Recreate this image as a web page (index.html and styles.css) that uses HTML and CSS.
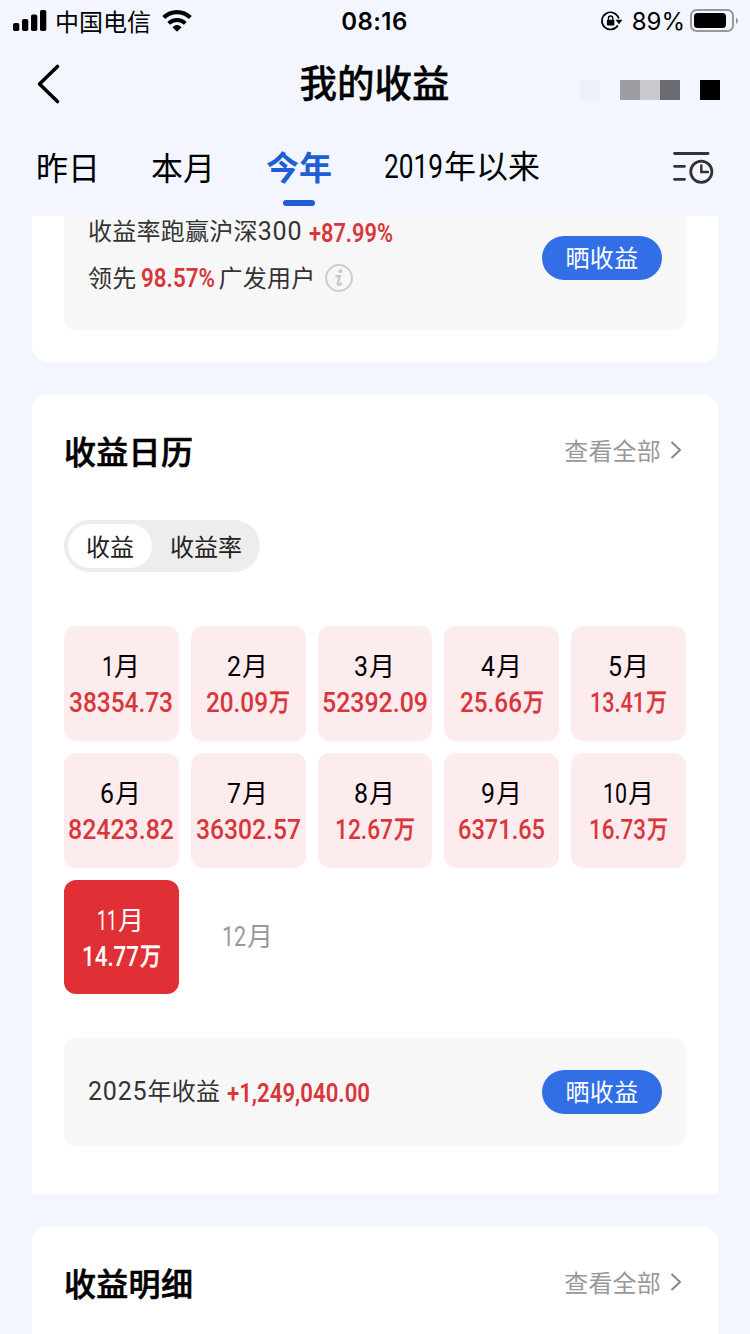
FILE: index.html
```html
<!DOCTYPE html>
<html lang="zh-CN">
<head>
<meta charset="utf-8">
<title>我的收益</title>
<link rel="stylesheet" href="styles.css">
</head>
<body>
<div class="status">
  <div class="status-left">
    <svg width="34" height="22" viewBox="0 0 34 22"><rect x="0" y="13" width="6.3" height="8" rx="1.8"/><rect x="9" y="9" width="6.3" height="12" rx="1.8"/><rect x="18" y="4.500" width="6.300" height="16.500" rx="1.800"/><rect x="27" y="0" width="6.300" height="21" rx="1.800"/></svg>
    <span class="carrier">中国电信</span>
    <svg width="30" height="22" viewBox="0 0 30 22"><path d="M1.700 7.600A18.800 18.800 0 0 1 28.300 7.600" fill="none" stroke="#000" stroke-width="4.200"/><path d="M6.700 13.300A11.800 11.800 0 0 1 23.300 13.300" fill="none" stroke="#000" stroke-width="4"/><path d="M10.400 17.200Q15 13 19.600 17.200L15 21.800Z"/></svg>
  </div>
  <span class="clock">08:16</span>
  <div class="status-right">
    <svg width="22" height="20" viewBox="0 0 22 20"><path d="M16.800 14.500A8.600 8.600 0 1 1 17.800 7.500" fill="none" stroke="#000" stroke-width="1.700"/><path d="M14.500 8.800H21.500L18 13.200Z"/><rect x="5.900" y="8.700" width="7.400" height="5.900" rx="1"/><path d="M7.400 9V7.200a2.200 2.200 0 0 1 4.400 0V9" fill="none" stroke="#000" stroke-width="1.300"/></svg>
    <span class="percent">89%</span>
    <svg width="50" height="24" viewBox="0 0 50 24"><rect x="1" y="1" width="42" height="21" rx="5.500" fill="none" stroke="#97989d" stroke-width="2"/><rect x="4" y="4" width="32" height="15" rx="3.500"/><path d="M46 8.500q2 .8 2 3.200t-2 3.200z" fill="#97989d"/></svg>
  </div>
</div>
<header class="header">
  <svg class="back" width="24" height="40" viewBox="0 0 24 40"><path d="M20.500 2.500L2.500 20L20.500 37.500" fill="none" stroke="#000" stroke-width="3.600" stroke-linecap="round" stroke-linejoin="round"/></svg>
  <h1 class="title">我的收益</h1>
  <div class="mosaic"><i class="m1"></i><i class="m0"></i><i class="m2"></i><i class="m3"></i><i class="m4"></i><i class="m0"></i><i class="m5"></i></div>
</header>
<nav class="tabs">
  <span class="tab">昨日</span>
  <span class="tab">本月</span>
  <span class="tab active">今年</span>
  <svg class="fit" width="158" height="48"><text x="0" y="34" textLength="59" lengthAdjust="spacingAndGlyphs" font-size="33">2019</text><text x="60" y="34" font-size="32">年以来</text></svg>
  <svg class="history" width="42" height="34" viewBox="0 0 42 34" fill="none" stroke="#333" stroke-width="2.800" stroke-linecap="round"><path d="M2.500 2.500H36M2.500 15.300H12.500M2.500 28.300H12.500"/><circle cx="29.300" cy="20.700" r="10.600"/><path d="M29.300 14.500V21H36" stroke-width="2.400"/></svg>
</nav>
<main class="content">
  <section class="card card-rank">
    <div class="panel panel-rank">
      <div class="rank-text">
        <div class="line"><span class="txt">收益率跑赢沪深<span class="digits">300</span></span><svg class="num gap-a" width="85" height="32"><text x="0" y="26" textLength="84" lengthAdjust="spacingAndGlyphs">+87.99%</text></svg></div>
        <div class="line"><span class="txt">领先</span><svg class="num gap-b" width="74" height="32"><text x="0" y="25" textLength="74" lengthAdjust="spacingAndGlyphs">98.57%</text></svg><span class="txt gap-b">广发用户</span><svg class="info" width="28" height="28" viewBox="0 0 28 28"><circle cx="14" cy="14" r="12.900" fill="none" stroke="#ccc" stroke-width="2"/><circle cx="15.300" cy="7.300" r="2" fill="#c8c8c8"/><path d="M10.500 12.200H14.800L12.700 19.600Q12.600 21.300 14.500 20.800L16.800 19.300" fill="none" stroke="#c8c8c8" stroke-width="2.400"/></svg></div>
      </div>
      <span class="share">晒收益</span>
    </div>
  </section>
  <section class="card card-calendar">
    <div class="card-head"><h2 class="h2">收益日历</h2><span class="more">查看全部<svg width="12" height="20" viewBox="0 0 12 20"><path d="M1.500 2L10 10L1.500 18" fill="none" stroke="#888" stroke-width="2"/></svg></span></div>
    <div class="switch"><span class="opt on">收益</span><span class="opt">收益率</span></div>
    <div class="months">
      <div class="cell"><svg class="mon" width="38" height="36"><text x="0" y="24" textLength="12" lengthAdjust="spacingAndGlyphs">1</text><text class="yue" x="12" y="24">月</text></svg><svg class="val" width="104" height="36"><text x="0" y="24" textLength="104" lengthAdjust="spacingAndGlyphs">38354.73</text></svg></div>
      <div class="cell"><svg class="mon" width="42" height="36"><text x="0" y="24" textLength="14" lengthAdjust="spacingAndGlyphs">2</text><text class="yue" x="15" y="24">月</text></svg><svg class="val" width="84" height="36"><text x="0" y="24" textLength="62" lengthAdjust="spacingAndGlyphs">20.09</text><text class="wan" x="63" y="23" textLength="21" lengthAdjust="spacingAndGlyphs">万</text></svg></div>
      <div class="cell"><svg class="mon" width="42" height="36"><text x="0" y="24" textLength="14" lengthAdjust="spacingAndGlyphs">3</text><text class="yue" x="15" y="24">月</text></svg><svg class="val" width="106" height="36"><text x="0" y="24" textLength="106" lengthAdjust="spacingAndGlyphs">52392.09</text></svg></div>
      <div class="cell"><svg class="mon" width="42" height="36"><text x="0" y="24" textLength="14" lengthAdjust="spacingAndGlyphs">4</text><text class="yue" x="15" y="24">月</text></svg><svg class="val" width="84" height="36"><text x="0" y="24" textLength="62" lengthAdjust="spacingAndGlyphs">25.66</text><text class="wan" x="63" y="23" textLength="21" lengthAdjust="spacingAndGlyphs">万</text></svg></div>
      <div class="cell"><svg class="mon" width="42" height="36"><text x="0" y="24" textLength="14" lengthAdjust="spacingAndGlyphs">5</text><text class="yue" x="15" y="24">月</text></svg><svg class="val" width="77" height="36"><text x="0" y="24" textLength="55" lengthAdjust="spacingAndGlyphs">13.41</text><text class="wan" x="56" y="23" textLength="21" lengthAdjust="spacingAndGlyphs">万</text></svg></div>
      <div class="cell"><svg class="mon" width="42" height="36"><text x="0" y="24" textLength="14" lengthAdjust="spacingAndGlyphs">6</text><text class="yue" x="15" y="24">月</text></svg><svg class="val" width="106" height="36"><text x="0" y="24" textLength="106" lengthAdjust="spacingAndGlyphs">82423.82</text></svg></div>
      <div class="cell"><svg class="mon" width="42" height="36"><text x="0" y="24" textLength="14" lengthAdjust="spacingAndGlyphs">7</text><text class="yue" x="15" y="24">月</text></svg><svg class="val" width="105" height="36"><text x="0" y="24" textLength="105" lengthAdjust="spacingAndGlyphs">36302.57</text></svg></div>
      <div class="cell"><svg class="mon" width="42" height="36"><text x="0" y="24" textLength="14" lengthAdjust="spacingAndGlyphs">8</text><text class="yue" x="15" y="24">月</text></svg><svg class="val" width="80" height="36"><text x="0" y="24" textLength="58" lengthAdjust="spacingAndGlyphs">12.67</text><text class="wan" x="59" y="23" textLength="21" lengthAdjust="spacingAndGlyphs">万</text></svg></div>
      <div class="cell"><svg class="mon" width="42" height="36"><text x="0" y="24" textLength="14" lengthAdjust="spacingAndGlyphs">9</text><text class="yue" x="15" y="24">月</text></svg><svg class="val" width="87" height="36"><text x="0" y="24" textLength="87" lengthAdjust="spacingAndGlyphs">6371.65</text></svg></div>
      <div class="cell"><svg class="mon" width="52" height="36"><text x="0" y="24" textLength="24" lengthAdjust="spacingAndGlyphs">10</text><text class="yue" x="25" y="24">月</text></svg><svg class="val" width="79" height="36"><text x="0" y="24" textLength="57" lengthAdjust="spacingAndGlyphs">16.73</text><text class="wan" x="58" y="23" textLength="21" lengthAdjust="spacingAndGlyphs">万</text></svg></div>
      <div class="cell current"><svg class="mon" width="48" height="36"><text x="0" y="24" textLength="20" lengthAdjust="spacingAndGlyphs">11</text><text class="yue" x="21" y="24">月</text></svg><svg class="val" width="79" height="36"><text x="0" y="24" textLength="57" lengthAdjust="spacingAndGlyphs">14.77</text><text class="wan" x="58" y="23" textLength="21" lengthAdjust="spacingAndGlyphs">万</text></svg></div>
      <div class="cell future"><svg class="mon" width="52" height="36"><text x="0" y="24" textLength="24" lengthAdjust="spacingAndGlyphs">12</text><text class="yue" x="25" y="24">月</text></svg></div>
    </div>
    <div class="panel panel-year">
      <div class="line"><span class="txt"><span class="digits">2025</span>年收益</span><svg class="num gap-a" width="144" height="32"><text x="0" y="26" textLength="143" lengthAdjust="spacingAndGlyphs">+1,249,040.00</text></svg></div>
      <span class="share">晒收益</span>
    </div>
  </section>
  <section class="card card-detail">
    <div class="card-head"><h2 class="h2">收益明细</h2><span class="more">查看全部<svg width="12" height="20" viewBox="0 0 12 20"><path d="M1.500 2L10 10L1.500 18" fill="none" stroke="#888" stroke-width="2"/></svg></span></div>
  </section>
</main>
</body>
</html>
```
FILE: styles.css
```css
* { box-sizing: border-box; margin: 0; padding: 0; }
html, body { height: 1334px; overflow: hidden; }
body {
  display: flex; flex-direction: column;
  background: #f3f6fe; color: #000;
  font-family: "Noto Sans CJK SC", sans-serif;
}
svg { display: block; flex: none; overflow: visible; }
.status {
  display: grid; grid-template-columns: 1fr auto 1fr; align-items: center;
  height: 40px; padding: 0 10px 0 13px; flex: none;
}
.status-left, .status-right { display: flex; align-items: center; }
.carrier { font-size: 24px; line-height: 40px; margin: 0 11px 0 8px; }
.clock { font: 600 24px/40px Inter, sans-serif; letter-spacing: .4px; padding-top: 2px; margin-left: -4px; }
.status-right { justify-content: flex-end; }
.percent { font: 400 24px/40px Inter, sans-serif; margin: 2px 5px 0 9px; }
.header {
  display: grid; grid-template-columns: 1fr auto 1fr; align-items: center;
  height: 88px; padding: 0 30px 0 37px; flex: none;
}
.title { font-size: 37.500px; font-weight: 500; line-height: 56px; margin: -3px 0 3px -8px; -webkit-text-stroke: .3px #000; }
.back { margin-top: -1px; }
.mosaic { display: flex; justify-content: flex-end; margin-top: 12px; }
.mosaic i { width: 20px; height: 20px; }
.m1 { background: #eef1f9; }
.m2 { background: #9d9ea3; }
.m3 { background: #c8c9ce; }
.m4 { background: #6a6b70; }
.m5 { background: #000; }
.tabs { display: flex; align-items: flex-start; height: 88px; padding: 16px 35px 0 36px; flex: none; }
.tab { font-size: 32px; line-height: 44px; margin-right: 51px; width: 64px; white-space: nowrap; }
.tab.active { display: flex; flex-direction: column; align-items: center; width: 66px; font-size: 33px; font-weight: 700; color: #215dd3; margin-right: 52px; }
.tab.active::after { content: ""; width: 32px; height: 6px; border-radius: 3px; background: #215dd3; margin-top: 12px; }
.fit { font-family: Roboto, "Noto Sans CJK SC", sans-serif; }
.fit text + text { font-family: "Noto Sans CJK SC", sans-serif; }
.history { margin: 7px 1px 0 auto; }
.content { display: flex; flex-direction: column; gap: 32px; padding: 0 32px; flex: 1; overflow: hidden; }
.card { background: #fff; border-radius: 16px; padding: 0 32px; flex: none; }
.card-rank { height: 146px; border-radius: 0 0 16px 16px; }
.panel { display: flex; justify-content: space-between; background: #f7f7f7; border-radius: 12px; padding: 0 24px; }
.panel-rank { height: 114px; border-radius: 0 0 12px 12px; }
.line { display: flex; align-items: center; height: 46px; }
.rank-text { margin-top: -7px; }
.txt { font-size: 24px; line-height: 36px; letter-spacing: .25px; color: #333; white-space: nowrap; margin-top: -2px; }
.digits { font-family: Roboto, sans-serif; font-size: 25px; letter-spacing: .8px; }
.num { font: 600 26px Roboto, sans-serif; fill: #d9363b; }
.gap-a { margin-left: 7px; }
.gap-b { margin-left: 4px; }
.info { margin-left: 9px; }
.share {
  width: 120px; height: 44px; border-radius: 22px; background: #326fe6; color: #fff;
  font-size: 24px; line-height: 42px; text-align: center; letter-spacing: .3px;
}
.panel-rank .share { margin-top: 20px; }
.card-calendar { height: 800px; border-radius: 16px 16px 0 0; }
.card-head { display: flex; justify-content: space-between; align-items: center; height: 112px; padding-right: 4px; }
.h2 { font-size: 32px; font-weight: 500; line-height: 48px; letter-spacing: .3px; -webkit-text-stroke: .6px #000; margin-top: -1px; }
.more { display: flex; align-items: center; gap: 9px; color: #999; font-size: 24px; line-height: 34px; letter-spacing: .2px; margin-top: -1px; }
.switch { display: inline-flex; vertical-align: top; height: 52px; margin-top: 14px; padding: 4px; background: #ededed; border-radius: 26px; }
.opt { height: 44px; padding: 0 14px 0 18px; border-radius: 22px; font-size: 24px; line-height: 44px; color: #222; }
.opt.on { background: #fff; padding-right: 18px; }
.months { display: grid; grid-template-columns: repeat(5, 1fr); grid-auto-rows: 114.800px; gap: 12px; margin-top: 54px; }
.cell { display: flex; flex-direction: column; align-items: center; padding-top: 26px; border-radius: 12px; background: #fdecee; }
.mon { font: 400 28px Roboto, sans-serif; }
.yue { font: 400 26px "Noto Sans CJK SC", sans-serif; }
.val { font: 500 28px Roboto, sans-serif; fill: #d9363b; }
.wan { font: 500 25px "Noto Sans CJK SC", sans-serif; stroke: #d9363b; stroke-width: .4px; }
.current { background: #e03036; }
.current .mon, .current .val { fill: #fff; }
.current .wan { stroke: #fff; }
.future { background: none; padding-top: 42px; }
.future .mon { fill: #999; }
.panel-year { height: 108px; margin-top: 44px; align-items: center; }
.card-detail { height: 160px; }
```
